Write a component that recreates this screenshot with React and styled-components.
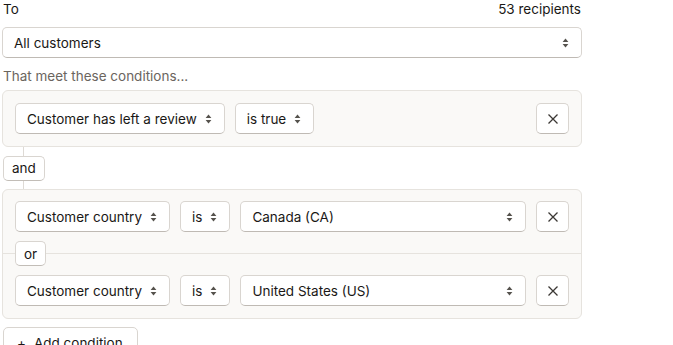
import React from 'react';
import styled, { createGlobalStyle } from 'styled-components';

const GlobalStyle = createGlobalStyle`
  body {
    margin: 0;
    background: #ffffff;
    font-family: Inter, "Noto Sans", sans-serif;
    font-size: 13.5px;
    color: #1a1816;
  }
`;

const Page = styled.div`
  width: 580px;
  margin-left: 2px;
`;

const HeaderRow = styled.div`
  display: flex;
  justify-content: space-between;
  align-items: center;
  height: 18px;
  padding: 0 1px;
`;

const Label = styled.span`
  line-height: 18px;
`;

const Select = styled.div`
  display: flex;
  align-items: center;
  gap: 8px;
  box-sizing: border-box;
  height: 31px;
  padding: 0 12px 0 11px;
  background: #ffffff;
  border: 1px solid #d9d5d0;
  border-bottom-color: #bfbab4;
  border-radius: 5px;
  white-space: nowrap;
  flex: ${(p) => (p.$grow ? '1' : '0 0 auto')};
  justify-content: ${(p) => (p.$grow ? 'space-between' : 'flex-start')};
  margin-top: ${(p) => p.$top || 0}px;
`;

const Hint = styled.div`
  margin-top: 9px;
  padding-left: 1px;
  line-height: 18px;
  color: #6b655e;
`;

const Card = styled.div`
  box-sizing: border-box;
  background: #faf9f7;
  border: 1px solid #e6e3de;
  border-radius: 6px;
  margin-top: ${(p) => p.$top || 0}px;
`;

const Row = styled.div`
  display: flex;
  align-items: center;
  gap: 10px;
  padding: ${(p) => p.$pad};
`;

const Divider = styled.div`
  position: relative;
  height: 43px;
  display: flex;
  align-items: center;
  padding-left: 12px;

  &::before {
    content: '';
    position: absolute;
    left: 0;
    right: 0;
    top: 21px;
    border-top: 1px solid #e6e3de;
  }
`;

const Connector = styled.div`
  position: relative;
  height: 42px;
  display: flex;
  align-items: center;
  padding-left: 1px;

  &::before {
    content: '';
    position: absolute;
    left: 21px;
    top: 0;
    bottom: 0;
    border-left: 1px solid #dedad5;
  }
`;

const Badge = styled.div`
  position: relative;
  box-sizing: border-box;
  height: 25px;
  padding: 0 8px;
  display: flex;
  align-items: center;
  background: #ffffff;
  border: 1px solid #d9d5d0;
  border-bottom-color: #c2bdb7;
  border-radius: 5px;
`;

const IconButton = styled.button`
  box-sizing: border-box;
  width: 33px;
  height: 31px;
  margin-left: auto;
  display: flex;
  align-items: center;
  justify-content: center;
  background: #ffffff;
  border: 1px solid #d9d5d0;
  border-bottom-color: #bfbab4;
  border-radius: 5px;
  padding: 0;
`;

const AddButton = styled.button`
  box-sizing: border-box;
  margin-top: 8px;
  margin-left: 1px;
  height: 31px;
  padding: 0 14px 0 13px;
  display: flex;
  align-items: center;
  gap: 8px;
  background: #ffffff;
  border: 1px solid #d9d5d0;
  border-radius: 5px;
  font-family: inherit;
  font-size: 13.5px;
  color: #1a1816;
`;

const SortIcon = () => (
  <svg width="7" height="10" viewBox="0 0 7 10" style={{ flex: 'none' }}>
    <path d="M3.5 0.6 L6.4 4 L0.6 4 Z" fill="#55524d" />
    <path d="M3.5 9.4 L6.4 6 L0.6 6 Z" fill="#55524d" />
  </svg>
);

const CloseIcon = () => (
  <svg width="12" height="12" viewBox="0 0 12 12">
    <path d="M1.5 1.5 L10.5 10.5 M10.5 1.5 L1.5 10.5" stroke="#3b3834" strokeWidth="1.3" fill="none" />
  </svg>
);

const Pick = ({ children, grow }) => (
  <Select $grow={grow}>
    <span>{children}</span>
    <SortIcon />
  </Select>
);

export default function App() {
  return (
    <Page>
      <GlobalStyle />
      <HeaderRow>
        <Label>To</Label>
        <Label>53 recipients</Label>
      </HeaderRow>
      <Select $grow $top={9}>
        <span>All customers</span>
        <SortIcon />
      </Select>
      <Hint>That meet these conditions...</Hint>
      <Card $top={5}>
        <Row $pad="12px">
          <Pick>Customer has left a review</Pick>
          <Pick>is true</Pick>
          <IconButton><CloseIcon /></IconButton>
        </Row>
      </Card>
      <Connector>
        <Badge>and</Badge>
      </Connector>
      <Card>
        <Row $pad="11px 12px 0">
          <Pick>Customer country</Pick>
          <Pick>is</Pick>
          <Pick grow>Canada (CA)</Pick>
          <IconButton><CloseIcon /></IconButton>
        </Row>
        <Divider>
          <Badge>or</Badge>
        </Divider>
        <Row $pad="0 12px 12px">
          <Pick>Customer country</Pick>
          <Pick>is</Pick>
          <Pick grow>United States (US)</Pick>
          <IconButton><CloseIcon /></IconButton>
        </Row>
      </Card>
      <AddButton>
        <span>+</span>
        <span>Add condition</span>
      </AddButton>
    </Page>
  );
}
